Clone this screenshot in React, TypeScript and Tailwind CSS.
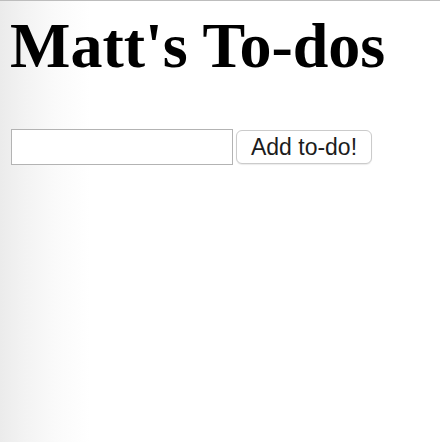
import { useState } from 'react';

export default function App() {
  const [todo, setTodo] = useState('');
  const [todos, setTodos] = useState<string[]>([]);

  const addTodo = () => {
    if (!todo.trim()) return;
    setTodos([...todos, todo.trim()]);
    setTodo('');
  };

  return (
    <div className="min-h-[442px] w-full border-t border-[#bdbdbd] bg-[linear-gradient(to_right,#ebebeb_0px,#f3f3f3_25px,#fafafa_55px,#ffffff_90px)]">
      <div className="pl-[11px]">
        <h1 className="pt-[13px] text-[64px] font-bold leading-[64px] text-black [font-family:'Liberation_Serif',serif] -ml-[1px]">
          Matt's To-dos
        </h1>

        {/* Input row */}
        <div className="mt-[51px] flex items-center gap-[3px]">
          <input
            value={todo}
            onChange={(e) => setTodo(e.target.value)}
            className="h-[36px] w-[222px] border border-[#b3b3b3] bg-white px-2 text-[20px] outline-none"
          />
          <button
            onClick={addTodo}
            className="h-[34px] w-[136px] rounded-[6px] border border-[#cbcbcb] bg-white text-[23px] leading-none text-[#1c1c1c] shadow-[0_1px_1px_rgba(0,0,0,0.08)] [font-family:'Liberation_Sans',sans-serif]"
          >
            Add to-do!
          </button>
        </div>

        {todos.length > 0 && (
          <ul className="mt-4 text-[20px] [font-family:'Liberation_Serif',serif]">
            {todos.map((t, i) => (
              <li key={i}>{t}</li>
            ))}
          </ul>
        )}
      </div>
    </div>
  );
}
